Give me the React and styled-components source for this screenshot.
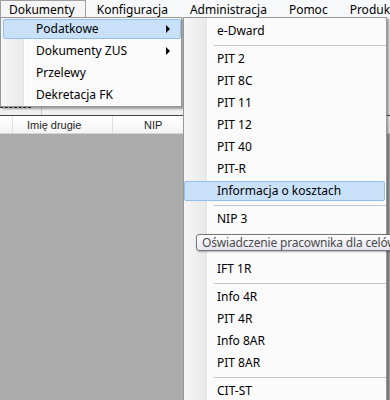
import React from 'react';
import styled, { createGlobalStyle } from 'styled-components';

const GlobalStyle = createGlobalStyle`
  html, body {
    margin: 0;
    padding: 0;
    overflow: hidden;
  }
  body {
    font-family: "Noto Sans", "Open Sans", sans-serif;
    font-size: 12px;
    color: #000;
  }
`;

const Window = styled.div`
  position: relative;
  width: 390px;
  height: 400px;
  overflow: hidden;
  display: flex;
  flex-direction: column;
  background: #f0f0f0;
`;

const MenuBar = styled.div`
  display: flex;
  height: 17px;
  flex: 0 0 17px;
  background: #f7f8fa;
  white-space: nowrap;
`;

const MenuTab = styled.div`
  box-sizing: border-box;
  flex: 0 0 auto;
  display: flex;
  align-items: center;
  height: 17px;
  padding: 1px 10px 0 ${({ $open }) => ($open ? '8px' : '10px')};
  border: 1px solid ${({ $open }) => ($open ? '#a0a0a0' : 'transparent')};
  border-bottom: none;
  background: ${({ $open }) => ($open ? '#f5f5f5' : 'transparent')};
  line-height: 16px;
`;

const Toolbar = styled.div`
  flex: 0 0 98px;
  display: flex;
  flex-direction: column;
  justify-content: flex-end;
  background: #f0f0f0;
`;

const TabRow = styled.div`
  display: flex;
  height: 9px;
`;

const FocusTab = styled.div`
  width: 31px;
  margin-right: 10px;
  border-top: 1px dashed #333;
  margin-top: 1px;
`;

const TabDivider = styled.div`
  width: 1px;
  background: #c8c8c8;
`;

const GridHeader = styled.div`
  box-sizing: border-box;
  flex: 0 0 19px;
  display: flex;
  border-top: 1px solid #444;
  border-bottom: 1px solid #d5d5d5;
  background: linear-gradient(#ffffff, #f4f4f4);
  font-family: "Liberation Sans", Arial, sans-serif;
  font-size: 11px;
  color: #1e1e1e;
`;

const HeaderCell = styled.div`
  box-sizing: border-box;
  width: ${({ $w }) => $w}px;
  padding-left: ${({ $pad }) => $pad || 0}px;
  display: flex;
  align-items: center;
  border-right: 1px solid #e0e0e0;
`;

const GridBody = styled.div`
  flex: 1;
  background: #ababab;
`;

const Menu = styled.div`
  position: absolute;
  top: 17px;
  left: ${({ $left }) => $left}px;
  width: ${({ $width }) => $width}px;
  box-sizing: border-box;
  display: flex;
  flex-direction: column;
  padding-top: ${({ $padTop }) => $padTop || 0}px;
  border: 1px solid #979797;
  background:
    linear-gradient(to right, #f6f6f6 0, #e9e9e9 22px, #e2e3e3 22px, #e2e3e3 23px, #ffffff 23px, #ffffff 24px, transparent 24px),
    #fbfbfb;
  box-shadow: 2px 2px 2px rgba(0, 0, 0, 0.35);
  white-space: nowrap;
  overflow: hidden;
`;

const Item = styled.div`
  box-sizing: border-box;
  flex: 0 0 auto;
  display: flex;
  align-items: center;
  height: ${({ $h }) => $h || 20}px;
  margin: 1px ${({ $mr }) => $mr || 0}px 1px ${({ $ml }) => $ml || 0}px;
  padding-left: 32px;
  border: 1px solid ${({ $active }) => ($active ? '#93bfea' : 'transparent')};
  border-radius: 2px;
  background: ${({ $active }) => ($active ? '#c9e1f8' : 'transparent')};
  line-height: 18px;
`;

const Arrow = styled.span`
  margin-left: auto;
  margin-right: 10px;
  width: 0;
  height: 0;
  border-left: 4px solid #000;
  border-top: 4px solid transparent;
  border-bottom: 4px solid transparent;
`;

const Separator = styled.div`
  flex: 0 0 6px;
  margin-left: 30px;
  display: flex;
  flex-direction: column;
  justify-content: center;

  &::before {
    content: '';
    height: 1px;
    background: #c5c5c5;
  }
`;

const Tooltip = styled.div`
  position: absolute;
  top: 234px;
  left: 196px;
  box-sizing: border-box;
  height: 17px;
  padding: 0 5px;
  display: flex;
  align-items: center;
  border: 1px solid #767676;
  border-radius: 3px;
  background: linear-gradient(#ffffff, #e4e5f0);
  box-shadow: 1px 1px 2px rgba(0, 0, 0, 0.3);
  color: #4c4c4c;
  letter-spacing: -0.18px;
  white-space: nowrap;
`;

const mainMenu = ['Dokumenty', 'Konfiguracja', 'Administracja', 'Pomoc', 'Produkcja'];

const firstMenu = [
  { label: 'Podatkowe', sub: true, active: true },
  { label: 'Dokumenty ZUS', sub: true },
  { label: 'Przelewy' },
  { label: 'Dekretacja FK' },
];

const taxMenu = [
  { label: 'e-Dward' },
  { sep: true },
  { label: 'PIT 2' },
  { label: 'PIT 8C' },
  { label: 'PIT 11' },
  { label: 'PIT 12' },
  { label: 'PIT 40' },
  { label: 'PIT-R' },
  { label: 'Informacja o kosztach', active: true },
  { sep: true },
  { label: 'NIP 3' },
  { label: '', h: 26 },
  { label: 'IFT 1R' },
  { sep: true },
  { label: 'Info 4R' },
  { label: 'PIT 4R' },
  { label: 'Info 8AR' },
  { label: 'PIT 8AR' },
  { sep: true },
  { label: 'CIT-ST' },
];

export default function App() {
  return (
    <>
      <GlobalStyle />
      <Window>
        <MenuBar>
          {mainMenu.map((m, i) => (
            <MenuTab key={m} $open={i === 0}>
              {m}
            </MenuTab>
          ))}
        </MenuBar>
        <Toolbar>
          <TabRow>
            <FocusTab />
            <TabDivider />
          </TabRow>
        </Toolbar>
        <GridHeader>
          <HeaderCell $w={13} />
          <HeaderCell $w={100} $pad={14}>Imię drugie</HeaderCell>
          <HeaderCell $w={100} $pad={31}>NIP</HeaderCell>
        </GridHeader>
        <GridBody />

        <Menu $left={0} $width={182}>
          {firstMenu.map((it) => (
            <Item key={it.label} $active={it.active} $ml={2} $mr={0}>
              {it.label}
              {it.sub && <Arrow />}
            </Item>
          ))}
        </Menu>

        <Menu $left={183} $width={204} $padTop={2} style={{ height: 400 }}>
          {taxMenu.map((it, i) =>
            it.sep ? (
              <Separator key={i} />
            ) : (
              <Item key={i} $active={it.active} $h={it.h} $mr={1}>
                {it.label}
              </Item>
            )
          )}
        </Menu>

        <Tooltip>Oświadczenie pracownika dla celów stosowania podwyższonych kosztów</Tooltip>
      </Window>
    </>
  );
}
